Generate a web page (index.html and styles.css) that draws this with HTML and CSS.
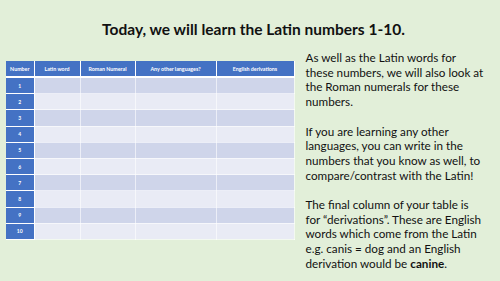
FILE: index.html
```html
<!DOCTYPE html>
<html>
<head>
<meta charset="utf-8">
<link rel="stylesheet" href="styles.css">
</head>
<body>
<div class="slide">
  <h1 class="title">Today, we will learn the Latin numbers 1-10.</h1>
  <div class="main">
    <table class="grid">
      <colgroup>
        <col class="c1"><col class="c2"><col class="c3"><col class="c4"><col class="c5">
      </colgroup>
      <thead>
        <tr><th>Number</th><th>Latin word</th><th>Roman Numeral</th><th>Any other languages?</th><th>English derivations</th></tr>
      </thead>
      <tbody>
        <tr class="odd"><td class="num">1</td><td></td><td></td><td></td><td></td></tr>
        <tr class="even"><td class="num">2</td><td></td><td></td><td></td><td></td></tr>
        <tr class="odd"><td class="num">3</td><td></td><td></td><td></td><td></td></tr>
        <tr class="even"><td class="num">4</td><td></td><td></td><td></td><td></td></tr>
        <tr class="odd"><td class="num">5</td><td></td><td></td><td></td><td></td></tr>
        <tr class="even"><td class="num">6</td><td></td><td></td><td></td><td></td></tr>
        <tr class="odd"><td class="num">7</td><td></td><td></td><td></td><td></td></tr>
        <tr class="even"><td class="num">8</td><td></td><td></td><td></td><td></td></tr>
        <tr class="odd"><td class="num">9</td><td></td><td></td><td></td><td></td></tr>
        <tr class="even"><td class="num">10</td><td></td><td></td><td></td><td></td></tr>
      </tbody>
    </table>
    <div class="text">
      <p>As well as the Latin words for<br>these numbers, we will also look at<br>the Roman numerals for these<br>numbers.</p>
      <p>If you are learning any other<br>languages, you can write in the<br>numbers that you know as well, to<br>compare/contrast with the Latin!</p>
      <p>The final column of your table is<br>for “derivations”. These are English<br>words which come from the Latin<br>e.g. canis = dog and an English<br>derivation would be <b>canine</b>.</p>
    </div>
  </div>
</div>
</body>
</html>
```
FILE: styles.css
```css
html, body {
  margin: 0;
  padding: 0;
}
body {
  width: 500px;
  height: 281px;
  overflow: hidden;
  background: #e2efd9;
  font-family: Lato, "Open Sans", sans-serif;
  color: #111;
}
.slide {
  width: 500px;
  height: 281px;
  display: flex;
  flex-direction: column;
}
.title {
  margin: 19px 0 0 7px;
  text-align: center;
  font-size: 15.5px;
  line-height: 20px;
  font-weight: bold;
}
.main {
  display: flex;
  align-items: flex-start;
  padding-left: 6px;
  margin-top: 11px;
}
.grid {
  border-collapse: collapse;
  table-layout: fixed;
  width: 288px;
  margin-top: 11px;
}
.c1 { width: 28px; }
.c2 { width: 46px; }
.c3 { width: 55px; }
.c4 { width: 81px; }
.c5 { width: 78px; }
.grid th {
  background: #4472c4;
  color: #fff;
  font-size: 5.3px;
  font-weight: bold;
  height: 15px;
  padding: 0;
  border: 1px solid #fff;
  border-top: none;
  border-bottom: 2px solid #fff;
}
.grid th:first-child { border-left: none; }
.grid td {
  height: 15.2px;
  padding: 0;
  border: 1px solid rgba(255,255,255,0.6);
}
.grid td:first-child { border-left: none; }
.grid tr.odd td { background: #cfd5ea; }
.grid tr.even td { background: #e9ebf5; }
.grid tr td.num {
  background: #4472c4;
  color: #fff;
  font-size: 5px;
  font-weight: bold;
  text-align: center;
  border-color: #fff;
}
.text {
  margin-left: 11px;
  white-space: nowrap;
  font-size: 11.7px;
  line-height: 14.7px;
  color: #111;
}
.text p {
  margin: 0 0 14.7px 0;
}
```
